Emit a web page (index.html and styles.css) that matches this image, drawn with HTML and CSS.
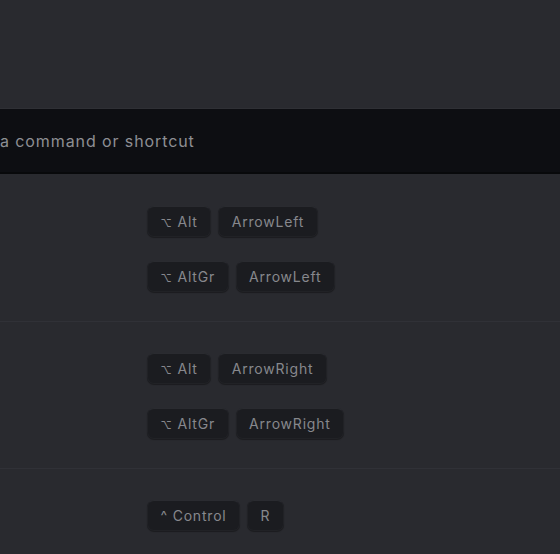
FILE: index.html
```html
<!DOCTYPE html>
<html>
<head>
<meta charset="utf-8">
<link rel="stylesheet" href="styles.css">
</head>
<body>
<div class="top"></div>
<div class="search">a command or shortcut</div>
<div class="list">
  <div class="group first">
    <div class="row"><div class="label"></div><div class="keys"><kbd><span class="mod">⌥</span> Alt</kbd><kbd>ArrowLeft</kbd></div></div>
    <div class="row"><div class="label"></div><div class="keys"><kbd><span class="mod">⌥</span> AltGr</kbd><kbd>ArrowLeft</kbd></div></div>
  </div>
  <div class="group">
    <div class="row"><div class="label"></div><div class="keys"><kbd><span class="mod">⌥</span> Alt</kbd><kbd>ArrowRight</kbd></div></div>
    <div class="row"><div class="label"></div><div class="keys"><kbd><span class="mod">⌥</span> AltGr</kbd><kbd>ArrowRight</kbd></div></div>
  </div>
  <div class="group">
    <div class="row"><div class="label"></div><div class="keys"><kbd>^ Control</kbd><kbd>R</kbd></div></div>
  </div>
</div>
</body>
</html>
```
FILE: styles.css
```css
html, body {
  margin: 0;
  padding: 0;
  background: #292a2f;
  font-family: Inter, "Open Sans", sans-serif;
  overflow: hidden;
}
.top {
  height: 108px;
  border-bottom: 1px solid #2f3035;
}
.search {
  height: 63px;
  background: #0d0e12;
  border-bottom: 2px solid #08090b;
  color: #8e8f94;
  font-size: 16px;
  letter-spacing: 0.9px;
  line-height: 64px;
  padding-left: 0;
  white-space: nowrap;
}
.group {
  padding: 31px 0 29px;
  border-top: 1px solid #303137;
  display: flex;
  flex-direction: column;
  gap: 24px;
}
.group.first {
  border-top: none;
  padding-top: 32px;
}
.row {
  display: flex;
  align-items: center;
}
.label {
  width: 147px;
  flex: none;
}
.keys {
  display: flex;
  gap: 7px;
}
kbd {
  font-family: inherit;
  font-size: 14px;
  letter-spacing: 0.8px;
  color: #87888d;
  background: #1b1c20;
  border: 1px solid #212226;
  border-top-color: #2a2b30;
  border-radius: 7px;
  height: 29px;
  line-height: 30px;
  padding: 0 12.5px;
  box-shadow: 0 1px 1px rgba(0,0,0,0.35);
}
.mod {
  font-size: 11px;
  letter-spacing: 0;
  margin-right: 1px;
}
```
